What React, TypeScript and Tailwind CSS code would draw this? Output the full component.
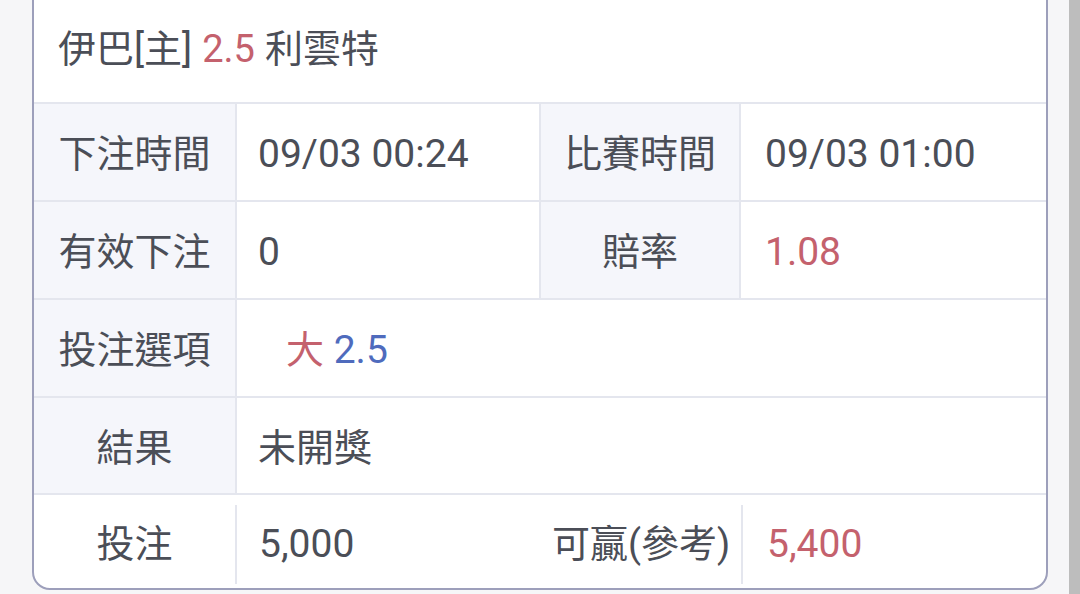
const FONT = "font-['Roboto','Noto_Sans_CJK_TC',sans-serif]";

type Cell = { label: string; value: React.ReactNode };

const Label = ({ children, w }: { children: React.ReactNode; w: string }) => (
  <div className={`${w} shrink-0 flex items-center justify-center border-r-2 border-[#e4e6ee] bg-[#f5f6fb] pt-[5px]`}>
    {children}
  </div>
);

const Row = ({ cells, h = "h-[98px]" }: { cells: Cell[]; h?: string }) => (
  <div className={`flex ${h} border-t-2 border-[#e4e6ee]`}>
    <Label w="w-[203px]">{cells[0].label}</Label>
    <div
      className={`${
        cells.length > 1 ? "w-[304px] border-r-2 border-[#e4e6ee]" : "flex-1"
      } shrink-0 flex items-center pl-[21px] pt-[5px] text-[39px]`}
    >
      {cells[0].value}
    </div>
    {cells[1] ? (
      <>
        <Label w="w-[200px]">{cells[1].label}</Label>
        <div className="flex flex-1 items-center pl-[24px] pt-[5px] text-[39px]">{cells[1].value}</div>
      </>
    ) : null}
  </div>
);

export default function App() {
  return (
    <div className={`${FONT} relative h-[594px] w-[1080px] overflow-hidden bg-[#f6f6f8] text-[38px] text-[#4b4e57]`}>
      <div className="pl-[32px] pr-[32px]">
        <div className="-mt-[8px] overflow-hidden rounded-b-[18px] border-2 border-[#9d9fbb] bg-white">
          <div className="flex h-[108px] items-center pl-[24px] pt-[2px]">
            伊巴[主] <span className="mx-[10px] text-[#c4616d]">2.5</span>利雲特
          </div>
          <Row
            cells={[
              { label: "下注時間", value: "09/03 00:24" },
              { label: "比賽時間", value: "09/03 01:00" },
            ]}
          />
          <Row
            cells={[
              { label: "有效下注", value: "0" },
              { label: "賠率", value: <span className="text-[#c4616d]">1.08</span> },
            ]}
          />
          <Row
            cells={[
              {
                label: "投注選項",
                value: (
                  <span className="pl-[28px]">
                    <span className="text-[38px] text-[#c4616d]">大</span>{" "}
                    <span className="text-[#4f6bbd]">2.5</span>
                  </span>
                ),
              },
            ]}
          />
          <Row h="h-[97px]" cells={[{ label: "結果", value: <span className="text-[38px]">未開獎</span> }]} />
          <div className="flex h-[95px] border-t-2 border-[#e4e6ee] pt-[6px]">
            <div className="flex w-[201px] shrink-0 items-center justify-center">投注</div>
            <div className="my-[4px] w-[2px] bg-[#e4e6ee]" />
            <div className="flex w-[304px] shrink-0 items-center pl-[22px] text-[39px]">5,000</div>
            <div className="flex w-[200px] shrink-0 items-center justify-center">可贏(參考)</div>
            <div className="my-[4px] w-[2px] bg-[#e4e6ee]" />
            <div className="flex flex-1 items-center pl-[24px] text-[39px] text-[#c4616d]">5,400</div>
          </div>
        </div>
      </div>
      {/* scrollbar track overlay */}
      <div className="absolute inset-y-0 right-0 w-[11px] bg-[#bdbdbd]" />
    </div>
  );
}
